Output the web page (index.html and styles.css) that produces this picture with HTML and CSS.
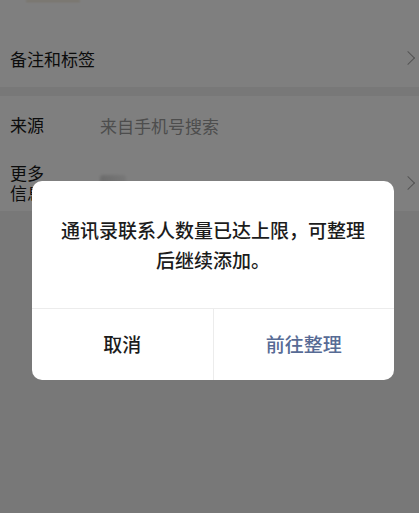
FILE: index.html
```html
<!DOCTYPE html>
<html lang="zh-CN">

<head>
    <meta charset="UTF-8">
    <meta name="viewport" content="width=device-width, initial-scale=1.0">
    <title>联系人资料</title>
    <link rel="stylesheet" href="styles.css">
</head>

<body>
    <div class="page">
        <div class="group group-top">
            <div class="top-strip"><span class="top-btn"></span></div>
            <div class="row row-link">
                <span class="label-wide">备注和标签</span>
                <span class="chevron"></span>
            </div>
        </div>
        <div class="group">
            <div class="row">
                <span class="label">来源</span>
                <span class="value">来自手机号搜索</span>
            </div>
            <div class="row row-more">
                <span class="label">更多信息</span>
                <span class="value"><span class="thumb"></span></span>
                <span class="chevron"></span>
            </div>
        </div>
    </div>

    <!-- 遮罩和弹窗 -->
    <div class="mask">
        <div class="dialog">
            <div class="dialog-msg">通讯录联系人数量已达上限，可整理后继续添加。</div>
            <div class="dialog-btns">
                <button type="button" class="btn">取消</button>
                <button type="button" class="btn btn-primary">前往整理</button>
            </div>
        </div>
    </div>
</body>

</html>
```

FILE: styles.css
```css
* {
    box-sizing: border-box;
}

body {
    margin: 0;
    width: 419px;
    height: 513px;
    overflow: hidden;
    background-color: #f0f0f0;
    font-family: "Noto Sans CJK SC", "Noto Sans", sans-serif;
    color: #181818;
}

.page {
    display: flex;
    flex-direction: column;
    gap: 9px;
}

.group {
    background-color: #fff;
}

.group-top {
    height: 87px;
    display: flex;
    flex-direction: column;
}

.top-strip {
    height: 31px;
    padding-left: 26px;
}

.top-btn {
    display: block;
    width: 54px;
    height: 2px;
    background-color: #f0e6d2;
    filter: blur(1px);
}

.row {
    display: flex;
    align-items: center;
    padding: 0 4px 0 10px;
    font-size: 17px;
    height: 58px;
}

.row-link {
    flex: 1;
    padding-bottom: 2px;
}

.label-wide {
    flex: 1;
}

.label {
    width: 90px;
    flex-shrink: 0;
    padding-right: 54px;
    line-height: 20px;
}

.value {
    flex: 1;
    color: #9a9a9a;
}

.row-more {
    height: 57px;
}

.thumb {
    display: block;
    width: 26px;
    height: 10px;
    border-radius: 3px;
    background: linear-gradient(90deg, #d8d8d8, #efefef);
    margin-top: -6px;
    filter: blur(1.5px);
}

.chevron {
    width: 10px;
    height: 10px;
    border-top: 1.5px solid #a8a8a8;
    border-right: 1.5px solid #a8a8a8;
    transform: rotate(45deg);
    margin-right: 2px;
}

.mask {
    position: absolute;
    left: 0;
    top: 0;
    width: 419px;
    height: 513px;
    background-color: rgba(0, 0, 0, 0.5);
}

.dialog {
    position: absolute;
    left: 32px;
    top: 181px;
    width: 362px;
    background-color: #fff;
    border-radius: 10px;
    overflow: hidden;
}

.dialog-msg {
    height: 127px;
    padding: 34px 26px 0;
    font-size: 19px;
    font-weight: 500;
    line-height: 30px;
    text-align: center;
    color: #1c1c1c;
}

.dialog-btns {
    display: flex;
    border-top: 1px solid #ececec;
    height: 72px;
}

.btn {
    flex: 1;
    border: none;
    background: none;
    font-family: inherit;
    font-size: 19px;
    font-weight: 500;
    color: #1c1c1c;
    padding: 0 0 2px;
}

.btn + .btn {
    border-left: 1px solid #ececec;
}

.btn-primary {
    color: #576b95;
}
```
